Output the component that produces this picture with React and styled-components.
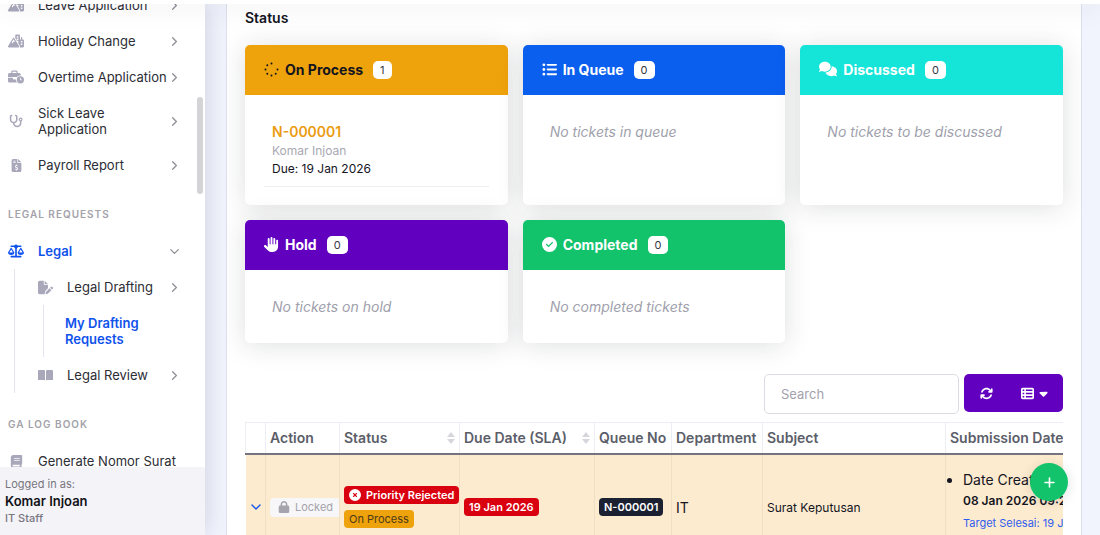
import styled, { createGlobalStyle } from "styled-components";
import {
	FaArrowsRotate,
	FaBook,
	FaBusinessTime,
	FaCaretDown,
	FaCircleCheck,
	FaCircleXmark,
	FaComments,
	FaFileInvoiceDollar,
	FaFilePen,
	FaHand,
	FaListUl,
	FaLock,
	FaMountainCity,
	FaPlus,
	FaScaleBalanced,
	FaSpinner,
	FaStethoscope,
	FaTableList,
} from "react-icons/fa6";
import { ChevronDown, ChevronRight } from "lucide-react";

const GlobalStyle = createGlobalStyle`
	* {
		box-sizing : border-box;
	}
	body {
		margin : 0;
		font-family : Inter, "Liberation Sans", sans-serif;
		font-size : 13px;
		color : #14151f;
		background-color : #f2f4fd;
	}
	button, input {
		font-family : inherit;
	}
`;

const Page = styled.div`
	display : flex;
	flex-direction : column;
	height : 100vh;
	overflow : hidden;
`;

// bottom edge of the top bar
const TopBar = styled.header`
	flex : none;
	height : 4px;
	background-color : #fff;
	box-shadow : 0 2px 24px rgba(33, 40, 50, 0.18);
	z-index : 2;
`;

const Body = styled.div`
	display : flex;
	flex : 1;
	min-height : 0;
`;

// Sidebar
const Sidebar = styled.aside`
	display : flex;
	flex-direction : column;
	flex : none;
	width : 205px;
	background-color : #fff;
	box-shadow : 0 0 24px rgba(33, 40, 80, 0.18);
`;

const MenuArea = styled.div`
	display : flex;
	flex : 1;
	min-height : 0;
	overflow : hidden;
`;

const Menu = styled.nav`
	flex : 1;
	margin-top : -17px;
`;

const ScrollThumb = styled.div`
	width : 6px;
	height : 97px;
	margin : 93px 2px 0 0;
	border-radius : 3px;
	background-color : #d4d3d6;
`;

const MenuHeading = styled.div`
	padding : 23px 8px 11px;
	font-size : 10px;
	font-weight : 600;
	line-height : 16px;
	letter-spacing : 1px;
	text-transform : uppercase;
	color : #a3a2aa;
`;

const MenuLink = styled.a`
	display : flex;
	align-items : center;
	padding : 10px 15px 10px 8px;
	font-size : 13px;
	line-height : 16px;
	font-weight : ${(p) => (p.$active ? 600 : 400)};
	color : ${(p) => (p.$active ? "#0f52ec" : "#2c2d35")};
	text-decoration : none;
`;

const MenuIcon = styled.span`
	display : flex;
	justify-content : center;
	flex : none;
	width : 16px;
	margin-right : 14px;
	font-size : ${(p) => p.$size || 14}px;
	color : ${(p) => (p.$active ? "#0f52ec" : "#a9a8bb")};
`;

const MenuLabel = styled.span`
	flex : 1;
`;

const Arrow = styled.span`
	display : flex;
	color : #8e8e96;
`;

const SubMenu = styled.div`
	margin-left : ${(p) => (p.$deep ? 6 : 14)}px;
	padding-left : ${(p) => (p.$deep ? 13 : 14)}px;
	border-left : 1px solid #e3e5ee;
`;

const DeepWrap = styled.div`
	margin-left : 8px;
`;

const SidebarFooter = styled.div`
	padding : 9px 5px 8px;
	background-color : #f4f3f8;
`;

const FooterLine = styled.div`
	font-size : ${(p) => (p.$name ? 13 : 11)}px;
	font-weight : ${(p) => (p.$name ? 600 : p.$role ? 500 : 400)};
	line-height : 17px;
	color : ${(p) => (p.$name ? "#111217" : "#77767e")};
`;

// Main column
const Main = styled.main`
	flex : 1;
	min-width : 0;
	padding : 0 18px 0 21px;
`;

const Panel = styled.section`
	height : 100%;
	padding : 6px 18px 0;
	background-color : #fff;
	border : 0 solid #dcdfee;
	border-width : 0 1px;
	overflow : hidden;
`;

const PanelTitle = styled.h2`
	margin : 0 0 19px;
	font-size : 14px;
	font-weight : 600;
	line-height : 16px;
`;

const CardGrid = styled.div`
	display : grid;
	grid-template-columns : repeat(3, 1fr);
	gap : 15px;
`;

const Card = styled.article`
	display : flex;
	flex-direction : column;
	border-radius : 5px;
	background-color : #fff;
	box-shadow : 0 2px 27px rgba(33, 40, 50, 0.15);
`;

const CardHeader = styled.h3`
	display : flex;
	align-items : center;
	height : 50px;
	margin : 0;
	padding : 0 19px 2px;
	border-radius : 5px 5px 0 0;
	font-size : 14px;
	font-weight : 700;
	background-color : ${(p) => p.$bg};
	color : ${(p) => p.$color || "#fff"};

	svg {
		margin-right : 6px;
		font-size : ${(p) => p.$icon || 15}px;
	}
`;

const Count = styled.span`
	margin : 2px 0 0 10px;
	padding : 0 7px;
	border-radius : 5px;
	background-color : #fff;
	color : #363844;
	font-size : 11px;
	font-weight : 400;
	line-height : 18px;
`;

const CardBody = styled.div`
	padding : 19px 19px 18px;
`;

const Ticket = styled.div`
	padding : 8px;
	border-bottom : 1px solid #eceef2;
	font-size : 12px;
	line-height : 18px;
`;

const TicketNo = styled.a`
	display : block;
	font-size : 14px;
	font-weight : 600;
	line-height : 20px;
	color : #eb9c13;
	text-decoration : none;
`;

const Requester = styled.div`
	color : #a9a8b2;
`;

const Empty = styled.p`
	margin : 0;
	padding : 8px;
	font-size : 14px;
	font-style : italic;
	line-height : 20px;
	color : #a09fac;
`;

// Table toolbar
const Toolbar = styled.div`
	display : flex;
	justify-content : flex-end;
	gap : 5px;
	margin : 31px 0 8px;
`;

const Search = styled.input`
	width : 195px;
	height : 40px;
	padding : 0 16px;
	border : 1px solid #dcdde4;
	border-radius : 5px;
	font-size : 13px;
	background-color : #fff;

	&::placeholder {
		color : #a3a2ac;
		opacity : 1;
	}
`;

const ButtonGroup = styled.div`
	display : flex;
	height : 38px;
	border-radius : 5px;
	background-color : #6200c0;
`;

const ToolButton = styled.button`
	display : flex;
	align-items : center;
	justify-content : center;
	gap : 3px;
	width : ${(p) => (p.$wide ? 55 : 44)}px;
	padding : 0;
	border : 0;
	background : none;
	color : #fff;
	font-size : 13px;
`;

const TableWrap = styled.div`
	overflow : hidden;
`;

const Table = styled.table`
	width : 100%;
	min-width : 840px;
	table-layout : fixed;
	border-collapse : collapse;
`;

const Th = styled.th`
	height : 31px;
	padding : 0 4px;
	border : 1px solid #eceef3;
	border-bottom : 2px solid #73747f;
	font-size : 14px;
	font-weight : 600;
	text-align : left;
	white-space : nowrap;
	color : #5b5e69;
`;

const ThInner = styled.div`
	display : flex;
	align-items : center;
	justify-content : space-between;
`;

const SortMark = styled.svg`
	width : 8px;
	height : 14px;
	fill : #d6d6dc;
`;

const Td = styled.td`
	height : 106px;
	padding : ${(p) => (p.$top ? "14px 4px 0" : "0 4px")};
	border-left : 1px solid #efdfc5;
	font-size : ${(p) => p.$size || 12}px;
	vertical-align : ${(p) => (p.$top ? "top" : "middle")};
	white-space : nowrap;
	background-color : #fdebcf;

	&:first-child {
		padding : 0 2px;
		border-left : 0;
	}
`;

const ExpandButton = styled.button`
	display : flex;
	padding : 0;
	border : 0;
	background : none;
	color : #0f52ec;
`;

const LockedButton = styled.button`
	display : flex;
	align-items : center;
	gap : 5px;
	height : 19px;
	padding : 0 8px;
	border : 0;
	border-radius : 4px;
	background-color : #f7f6f9;
	color : #a5a4ac;
	font-size : 11px;
`;

const BadgeStack = styled.div`
	display : flex;
	flex-direction : column;
	align-items : flex-start;
	gap : 6px;
`;

const Badge = styled.span`
	display : inline-flex;
	align-items : center;
	gap : 5px;
	height : 18px;
	padding : 0 5px;
	border-radius : 4px;
	font-size : 11px;
	font-weight : ${(p) => (p.$plain ? 400 : 600)};
	background-color : ${(p) => p.$bg};
	color : ${(p) => (p.$plain ? "#4d3a1a" : "#fff")};
`;

const DateList = styled.ul`
	margin : 0;
	padding-left : 13px;
	font-size : 14px;
	line-height : 21px;
`;

const DateValue = styled.div`
	font-size : 12px;
	font-weight : 600;
	line-height : 22px;
`;

const Target = styled.div`
	font-size : 11px;
	line-height : 22px;
	color : #2f5cf0;
`;

// Floating add button
const AddButton = styled.button`
	position : fixed;
	right : 32px;
	bottom : 34px;
	display : flex;
	align-items : center;
	justify-content : center;
	width : 38px;
	height : 38px;
	padding : 0;
	border : 0;
	border-radius : 50%;
	background-color : #12c36b;
	color : #fff;
	font-size : 13px;
	box-shadow : 0 2px 12px rgba(33, 40, 50, 0.15);
`;

const cards = [
	{ title: "In Queue", icon: FaListUl, bg: "#0b5fee", empty: "No tickets in queue" },
	{ title: "Discussed", icon: FaComments, bg: "#14e5d8", empty: "No tickets to be discussed", size: 18 },
	{ title: "Hold", icon: FaHand, bg: "#6200c0", empty: "No tickets on hold" },
	{ title: "Completed", icon: FaCircleCheck, bg: "#12c36b", empty: "No completed tickets" },
];

const columns = [
	{ label: "", width: 20 },
	{ label: "Action", width: 74 },
	{ label: "Status", width: 120, sort: true },
	{ label: "Due Date (SLA)", width: 135, sort: true },
	{ label: "Queue No", width: 77 },
	{ label: "Department", width: 91 },
	{ label: "Subject", width: 183 },
	{ label: "Submission Date", width: 140 },
];

// eight even dots with the upper right one left out
function DotSpinnerIcon() {
	const dots = [
		[7.5, 1.5],
		[13.5, 7.5],
		[11.7, 11.7],
		[7.5, 13.5],
		[3.3, 11.7],
		[1.5, 7.5],
		[3.3, 3.3],
	];
	return (
		<svg width="15" height="15" viewBox="0 0 15 15" fill="currentColor" aria-hidden="true">
			{dots.map(([x, y]) => (
				<circle key={`${x}-${y}`} cx={x} cy={y} r="1" />
			))}
		</svg>
	);
}

function OpenBookIcon() {
	return (
		<svg width="15" height="12" viewBox="0 0 15 12" fill="currentColor" aria-hidden="true">
			<path d="M1 1h5l1 .5v10L6 11H0V2a1 1 0 0 1 1-1zM14 1H9l-1 .5v10l1-.5h6V2a1 1 0 0 0-1-1z" />
		</svg>
	);
}

function MenuItem({ icon: Icon, label, active, open, arrow = true, size }) {
	return (
		<MenuLink href="#" $active={active}>
			{Icon && (
				<MenuIcon $active={active} $size={size}>
					<Icon />
				</MenuIcon>
			)}
			<MenuLabel>{label}</MenuLabel>
			{arrow && (
				<Arrow>
					{open ? <ChevronDown size={15} strokeWidth={2} /> : <ChevronRight size={15} strokeWidth={2} />}
				</Arrow>
			)}
		</MenuLink>
	);
}

function SidebarMenu() {
	return (
		<Sidebar>
			<MenuArea>
				<Menu>
					<MenuItem icon={FaMountainCity} label="Leave Application" size={16} />
					<MenuItem icon={FaMountainCity} label="Holiday Change" size={16} />
					<MenuItem icon={FaBusinessTime} label="Overtime Application" size={16} />
					<MenuItem icon={FaStethoscope} label="Sick Leave Application" />
					<MenuItem icon={FaFileInvoiceDollar} label="Payroll Report" size={13} />
					<MenuHeading>Legal Requests</MenuHeading>
					<MenuItem icon={FaScaleBalanced} label="Legal" size={16} active open />
					<SubMenu>
						<MenuItem icon={FaFilePen} label="Legal Drafting" size={15} />
						<DeepWrap>
							<SubMenu $deep>
								<MenuItem label="My Drafting Requests" active arrow={false} />
							</SubMenu>
						</DeepWrap>
						<MenuItem icon={OpenBookIcon} label="Legal Review" />
					</SubMenu>
					<MenuHeading>GA Log Book</MenuHeading>
					<MenuItem icon={FaBook} label="Generate Nomor Surat" size={13} arrow={false} />
				</Menu>
				<ScrollThumb />
			</MenuArea>
			<SidebarFooter>
				<FooterLine>Logged in as:</FooterLine>
				<FooterLine $name>Komar Injoan</FooterLine>
				<FooterLine $role>IT Staff</FooterLine>
			</SidebarFooter>
		</Sidebar>
	);
}

function StatusCards() {
	return (
		<CardGrid>
			<Card>
				<CardHeader $bg="#eea20b" $color="#14151f">
					<DotSpinnerIcon />
					On Process
					<Count>1</Count>
				</CardHeader>
				<CardBody>
					<Ticket>
						<TicketNo href="#">N-000001</TicketNo>
						<Requester>Komar Injoan</Requester>
						<div>Due: 19 Jan 2026</div>
					</Ticket>
				</CardBody>
			</Card>
			{cards.map(({ title, icon: Icon, bg, empty, size }) => (
				<Card key={title}>
					<CardHeader $bg={bg} $icon={size}>
						<Icon />
						{title}
						<Count>0</Count>
					</CardHeader>
					<CardBody>
						<Empty>{empty}</Empty>
					</CardBody>
				</Card>
			))}
		</CardGrid>
	);
}

function RequestTable() {
	return (
		<TableWrap>
			<Table>
				<colgroup>
					{columns.map((c, i) => (
						<col key={i} width={c.width} />
					))}
				</colgroup>
				<thead>
					<tr>
						{columns.map((c, i) => (
							<Th key={i}>
								<ThInner>
									{c.label}
									{c.sort && (
										<SortMark viewBox="0 0 8 14" aria-hidden="true">
											<path d="M4 1l4 5H0zM4 13L0 8h8z" />
										</SortMark>
									)}
								</ThInner>
							</Th>
						))}
					</tr>
				</thead>
				<tbody>
					<tr>
						<Td>
							<ExpandButton aria-label="Show details">
								<ChevronDown size={16} />
							</ExpandButton>
						</Td>
						<Td>
							<LockedButton disabled>
								<FaLock size={12} />
								Locked
							</LockedButton>
						</Td>
						<Td>
							<BadgeStack>
								<Badge $bg="#d9000f">
									<FaCircleXmark size={12} />
									Priority Rejected
								</Badge>
								<Badge $bg="#eea20b" $plain>On Process</Badge>
							</BadgeStack>
						</Td>
						<Td>
							<Badge $bg="#d9000f">19 Jan 2026</Badge>
						</Td>
						<Td>
							<Badge $bg="#1b2130">N-000001</Badge>
						</Td>
						<Td $size={14}>IT</Td>
						<Td>Surat Keputusan</Td>
						<Td $top>
							<DateList>
								<li>
									Date Created:
									<DateValue>08 Jan 2026 09:27</DateValue>
									<Target>Target Selesai: 19 Jan 2026</Target>
								</li>
							</DateList>
						</Td>
					</tr>
				</tbody>
			</Table>
		</TableWrap>
	);
}

function App() {
	return (
		<Page>
			<GlobalStyle />
			<TopBar />
			<Body>
				<SidebarMenu />
				<Main>
					<Panel>
						<PanelTitle>Status</PanelTitle>
						<StatusCards />
						<Toolbar>
							<Search type="search" placeholder="Search" aria-label="Search" />
							<ButtonGroup>
								<ToolButton aria-label="Refresh">
									<FaArrowsRotate />
								</ToolButton>
								<ToolButton $wide aria-label="Columns">
									<FaTableList />
									<FaCaretDown />
								</ToolButton>
							</ButtonGroup>
						</Toolbar>
						<RequestTable />
					</Panel>
				</Main>
			</Body>
			<AddButton aria-label="Add request">
				<FaPlus />
			</AddButton>
		</Page>
	);
}

export default App;
